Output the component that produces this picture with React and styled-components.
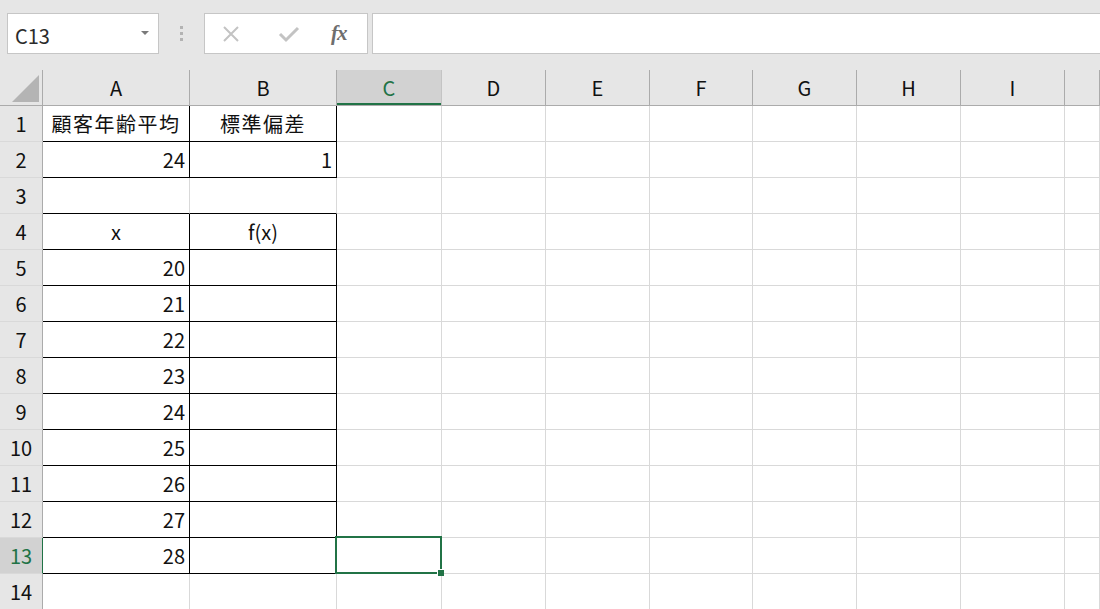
import React from "react";
import styled, { createGlobalStyle, css } from "styled-components";

const GREEN = "#217346";
const GRID = "#d9d9d9";
const HEAD_LINE = "#ababab";

const GlobalStyle = createGlobalStyle`
  body {
    margin: 0;
    background: #ffffff;
    overflow: hidden;
    font-family: "Noto Sans CJK JP", "Noto Sans", sans-serif;
  }
`;

const COLS = ["A", "B", "C", "D", "E", "F", "G", "H", "I", ""];
const WIDTHS = [147, 147, 105, 104, 104, 103, 104, 104, 104];

const ROWS = [
  { a: "顧客年齢平均", b: "標準偏差", aAlign: "center", bAlign: "center", boxed: true, wide: true },
  { a: "24", b: "1", aAlign: "right", bAlign: "right", boxed: true },
  { a: "", b: "", boxed: false, topOfBox: true },
  { a: "x", b: "f(x)", aAlign: "center", bAlign: "center", boxed: true },
  { a: "20", b: "", aAlign: "right", boxed: true },
  { a: "21", b: "", aAlign: "right", boxed: true },
  { a: "22", b: "", aAlign: "right", boxed: true },
  { a: "23", b: "", aAlign: "right", boxed: true },
  { a: "24", b: "", aAlign: "right", boxed: true },
  { a: "25", b: "", aAlign: "right", boxed: true },
  { a: "26", b: "", aAlign: "right", boxed: true },
  { a: "27", b: "", aAlign: "right", boxed: true },
  { a: "28", b: "", aAlign: "right", boxed: true },
  { a: "", b: "", boxed: false },
];

export default function App() {
  return (
    <>
      <GlobalStyle />
      <Window>
        <FormulaBar>
          <NameBox>
            <span>C13</span>
            <DropArrow />
          </NameBox>
          <Grip>
            <i />
            <i />
            <i />
          </Grip>
          <FxButtons>
            <IconSlot>
              <svg width="18" height="18" viewBox="0 0 18 18">
                <path d="M2 2 L16 16 M16 2 L2 16" stroke="#c3c3c3" strokeWidth="2" fill="none" />
              </svg>
            </IconSlot>
            <IconSlot>
              <svg width="22" height="18" viewBox="0 0 22 18">
                <path d="M2 9 L8 15 L20 3" stroke="#c3c3c3" strokeWidth="3" fill="none" />
              </svg>
            </IconSlot>
            <FxLabel>fx</FxLabel>
          </FxButtons>
          <FormulaInput />
        </FormulaBar>

        <Sheet>
          <Corner />
          {COLS.map((c) => (
            <ColHead key={c || "j"} $active={c === "C"}>
              {c}
            </ColHead>
          ))}

          {ROWS.map((r, i) => {
            const n = i + 1;
            const box = r.boxed || r.topOfBox;
            return (
              <React.Fragment key={n}>
                <RowHead $active={n === 13}>{n}</RowHead>
                <Cell $align={r.aAlign} $wide={r.wide} $blackBottom={box} $blackRight={r.boxed}>
                  {r.a}
                </Cell>
                <Cell $align={r.bAlign} $wide={r.wide} $blackBottom={box} $blackRight={r.boxed}>
                  {r.b}
                </Cell>
                {COLS.slice(2).map((c, j) => (
                  <Cell key={j} $selected={n === 13 && c === "C"}>
                    {n === 13 && c === "C" && <FillHandle />}
                  </Cell>
                ))}
              </React.Fragment>
            );
          })}
        </Sheet>
      </Window>
    </>
  );
}

const Window = styled.div`
  width: 1100px;
  height: 609px;
  display: flex;
  flex-direction: column;
  overflow: hidden;
  background: #ffffff;
`;

const FormulaBar = styled.div`
  height: 70px;
  flex: none;
  background: #e6e6e6;
  display: flex;
  align-items: flex-start;
  padding: 13px 0 0 7px;
  box-sizing: border-box;
`;

const Boxed = css`
  height: 41px;
  box-sizing: border-box;
  background: #ffffff;
  border: 1px solid #c6c6c6;
`;

const NameBox = styled.div`
  ${Boxed};
  width: 152px;
  display: flex;
  align-items: center;
  justify-content: space-between;
  padding: 3px 9px 0 7px;
  font-size: 20px;
  color: #2b2b2b;
`;

const DropArrow = styled.span`
  width: 0;
  height: 0;
  border-left: 4px solid transparent;
  border-right: 4px solid transparent;
  border-top: 4px solid #7a7a7a;
  margin-top: -5px;
`;

const Grip = styled.div`
  width: 45px;
  height: 41px;
  display: flex;
  flex-direction: column;
  align-items: center;
  justify-content: center;
  gap: 3px;

  i {
    display: block;
    width: 3px;
    height: 3px;
    background: #b3b3b3;
  }
`;

const FxButtons = styled.div`
  ${Boxed};
  width: 164px;
  display: flex;
  align-items: center;
  padding-left: 17px;
`;

const IconSlot = styled.span`
  width: 56px;
  display: flex;
  align-items: center;
  justify-content: flex-start;
`;

const FxLabel = styled.span`
  font-family: "Liberation Serif", serif;
  font-style: italic;
  font-weight: bold;
  font-size: 21px;
  color: #6e6e6e;
  margin-left: -3px;
  letter-spacing: -1px;
`;

const FormulaInput = styled.div`
  ${Boxed};
  flex: 1;
  margin-left: 4px;
  margin-right: -10px;
`;

const Sheet = styled.div`
  display: grid;
  grid-template-columns: 43px ${WIDTHS.map((w) => `${w}px`).join(" ")} 1fr;
  grid-auto-rows: 36px;
`;

const Corner = styled.div`
  background: #e6e6e6;
  border-right: 1px solid ${HEAD_LINE};
  border-bottom: 1px solid ${HEAD_LINE};
  position: relative;

  &::after {
    content: "";
    position: absolute;
    left: 12px;
    top: 5px;
    width: 27px;
    height: 27px;
    background: #b4b4b4;
    clip-path: polygon(100% 0, 100% 100%, 0 100%);
  }
`;

const ColHead = styled.div`
  background: ${(p) => (p.$active ? "#d2d2d2" : "#e6e6e6")};
  color: ${(p) => (p.$active ? GREEN : "#111")};
  border-right: 1px solid ${(p) => (p.$active ? "#c4c4c4" : HEAD_LINE)};
  border-bottom: 1px solid ${HEAD_LINE};
  box-shadow: ${(p) => (p.$active ? `inset 0 -2px 0 ${GREEN}` : "none")};
  display: flex;
  align-items: center;
  justify-content: center;
  font-size: 20px;
  padding-bottom: 1px;
  box-sizing: border-box;
`;

const RowHead = styled.div`
  background: ${(p) => (p.$active ? "#d2d2d2" : "#e6e6e6")};
  color: ${(p) => (p.$active ? GREEN : "#111")};
  border-right: 1px solid ${(p) => (p.$active ? GREEN : HEAD_LINE)};
  border-bottom: 1px solid ${GRID};
  display: flex;
  align-items: center;
  justify-content: center;
  font-size: 20px;
  box-sizing: border-box;
`;

const Cell = styled.div`
  border-right: 1px solid ${(p) => (p.$blackRight ? "#000" : GRID)};
  border-bottom: 1px solid ${(p) => (p.$blackBottom ? "#000" : GRID)};
  display: flex;
  align-items: center;
  justify-content: ${(p) =>
    p.$align === "right" ? "flex-end" : p.$align === "center" ? "center" : "flex-start"};
  padding: 0 4px;
  box-sizing: border-box;
  font-size: 20px;
  letter-spacing: ${(p) => (p.$wide ? "1.5px" : "0")};
  color: #111;
  white-space: nowrap;
  position: ${(p) => (p.$selected ? "relative" : "static")};

  ${(p) =>
    p.$selected &&
    css`
      &::after {
        content: "";
        position: absolute;
        top: -2px;
        left: -2px;
        right: -1px;
        bottom: -1px;
        border: 2px solid ${GREEN};
        pointer-events: none;
      }
    `}
`;

const FillHandle = styled.span`
  position: absolute;
  right: -3px;
  bottom: -3px;
  width: 6px;
  height: 6px;
  background: ${GREEN};
  border-left: 1px solid #fff;
  border-top: 1px solid #fff;
  z-index: 2;
`;
